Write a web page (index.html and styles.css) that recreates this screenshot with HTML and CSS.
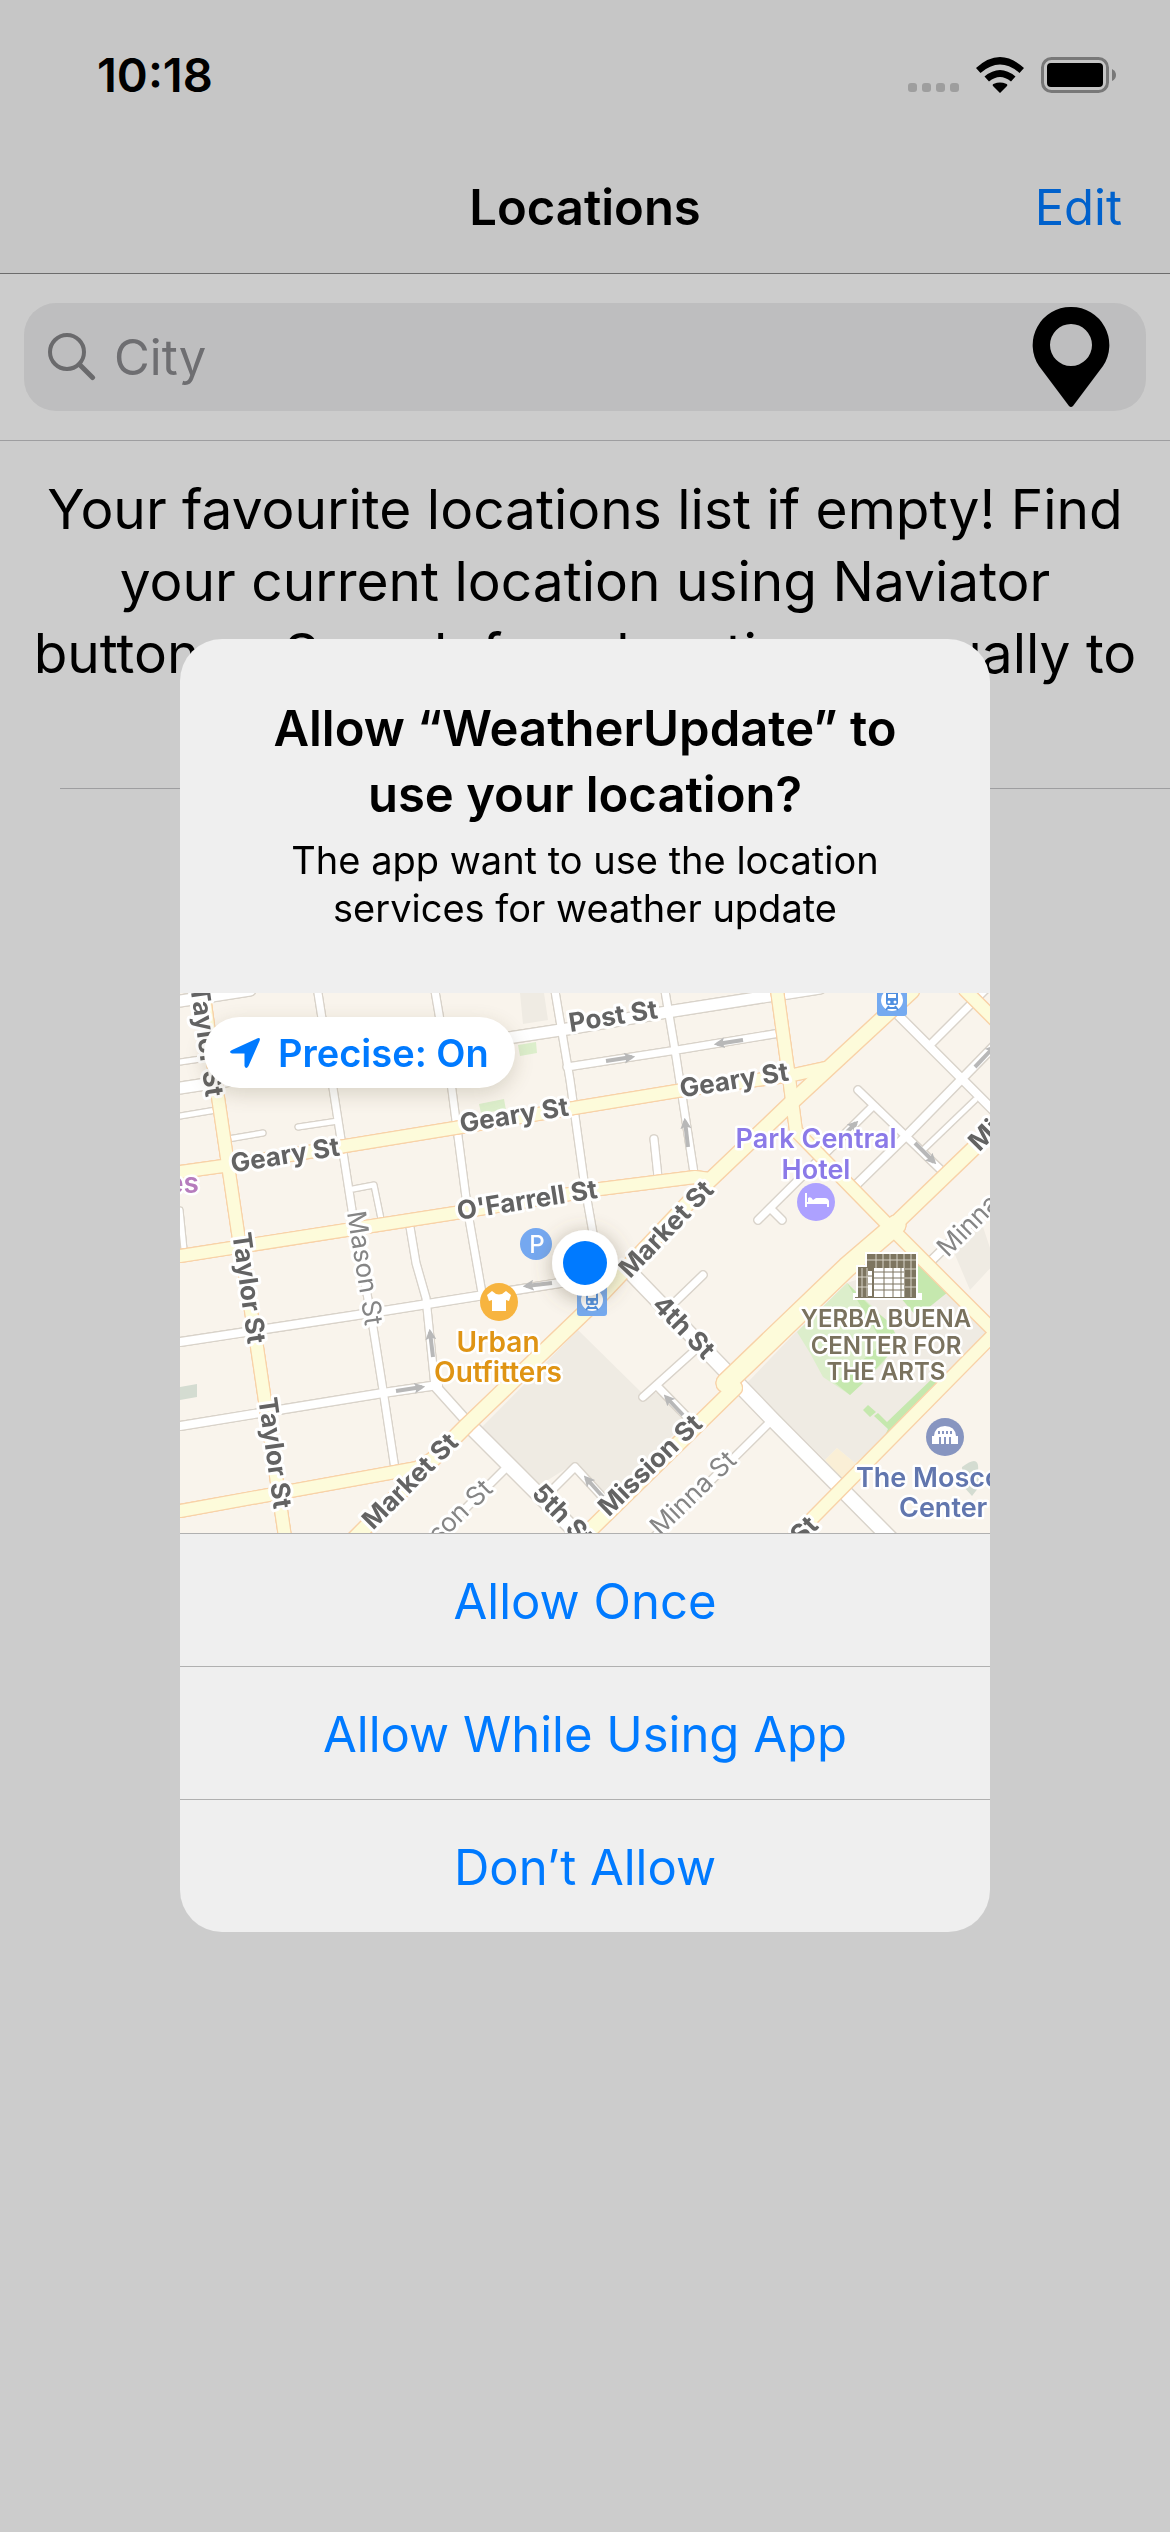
FILE: index.html
```html
<!DOCTYPE html>
<html lang="en">
<head>
<meta charset="utf-8">
<meta name="viewport" content="width=device-width, initial-scale=1">
<title>Locations</title>
<link rel="stylesheet" href="styles.css">
</head>
<body>
<div class="app">
  <header class="header">
    <div class="status">
      <span class="time">10:18</span>
      <div class="status-icons">
        <svg width="51" height="36" viewBox="0 0 51 36" aria-hidden="true"><g fill="#c6c6c6"><rect x="0" y="26" width="9" height="9" rx="3"/><rect x="14" y="26" width="9" height="9" rx="3"/><rect x="28" y="26" width="9" height="9" rx="3"/><rect x="42" y="26" width="9" height="9" rx="3"/></g></svg>
        <svg width="48" height="36" viewBox="0 0 48 36" aria-hidden="true"><path d="M24 36L17 29Q16 27.500 18 26.800Q24 24 30 26.800Q32 27.500 31 29ZM8.500 19.500Q24 6.500 39.500 19.500L35 24.500Q24 15.500 13 24.500ZM0 11Q24 -11 48 11L43.500 16Q24 -1 4.500 16Z"/></svg>
        <svg width="75" height="36" viewBox="0 0 75 36" aria-hidden="true"><rect x="1.500" y="1.500" width="65" height="33" rx="9" fill="none" stroke="#969696" stroke-width="3"/><rect x="6" y="6" width="56" height="24" rx="4"/><path d="M71 12Q75 14 75 18T71 24Z" fill="#969696"/></svg>
      </div>
    </div>
    <div class="nav">
      <h1 class="nav-title">Locations</h1>
      <button class="nav-edit" type="button">Edit</button>
    </div>
  </header>
  <main>
    <div class="search-bar">
      <label class="search-field">
        <svg width="48" height="48" viewBox="0 0 48 48" aria-label="Search"><g fill="none" stroke="#858588" stroke-width="4"><circle cx="19" cy="19" r="17"/><path d="M31.500 31.500L44.500 44.500" stroke-width="5" stroke-linecap="round"/></g></svg>
        <input class="search-input" type="text" placeholder="City">
        <button class="locate" type="button" aria-label="Use current location">
          <svg width="78" height="100" viewBox="0 0 78 100" aria-hidden="true"><path fill-rule="evenodd" d="M39 0A38 38 0 0 1 71 59L41 99Q39 101 37 99L7 59A38 38 0 0 1 39 0ZM39 17a21 21 0 1 0 0 42a21 21 0 1 0 0-42Z"/></svg>
        </button>
      </label>
    </div>
    <p class="empty">Your favourite locations list if empty! Find<br>your current location using Naviator<br>button or Search for a location manually to</p>
    <hr class="rule">
  </main>
</div>

<div class="backdrop">
  <section class="dialog" role="dialog" aria-labelledby="dialog-title">
    <div class="dialog-head">
      <h2 class="dialog-title" id="dialog-title">Allow “WeatherUpdate” to<br>use your location?</h2>
      <p class="dialog-text">The app want to use the location<br>services for weather update</p>
    </div>
    <div class="map">
      <svg class="map-art" viewBox="0 0 810 540" preserveAspectRatio="xMidYMid slice" role="img" aria-label="Map">
        <defs>
          <marker id="arrow" viewBox="0 0 10 10" refX="7" refY="5" markerWidth="11" markerHeight="11" markerUnits="userSpaceOnUse" orient="auto"><path d="M0 0L10 5L0 10L2 5Z" fill="#b8b8b8"/></marker>
          <filter id="soft" x="-50%" y="-50%" width="200%" height="200%"><feDropShadow dx="0" dy="3" stdDeviation="10" flood-color="#6a6450" flood-opacity=".45"/></filter>
          <g id="whites">
            <path stroke-width="11" d="M0 8L70-3M0 95L387 36L487 19L640-5"/>
            <path stroke-width="5" d="M0 69L34 64M0 123L36 117M48 146L83 140M118 134L158 128M173 196L194 192L201 226M0 217L4 256M795 107L743 157"/>
            <path stroke-width="7" d="M138 0L153 95L172 217L193 334L203 397L215 476M255-2L272 97L288 220L302 300M375-2L390 87L405 195L413 240M485-2L495 57L514 180M474 146L478 184M387 74L497 57L600 40M230 234L236 270L246 305L255 394M327 474L245 556M370 499L395 474L428 510M523 282L494 310M513 359L463 404M478 394L513 430M587 432L468 550M750 52L806-4M678 97L762 178M692 114L578 227M590 215L602 227"/>
            <path stroke-width="8" d="M0 349L197 319L380 290M0 433L203 400L258 392M713 17L815 119M815 52L727 142L676 192M790 230L752 267"/>
            <path stroke-width="9" d="M256 394L292 434"/>
            <path stroke-width="14" d="M290 433L410 553M448 277L593 427L715 550"/>
          </g>
          <g id="yellows">
            <path stroke-width="12" d="M23-4L38 104L58 240L77 354L105 544M0 179L43 173L275 135L400 114L497 98L613 82L645 75M0 263L275 220L420 196L515 184L530 186M0 518L237 475L262 460M597-3L608 77L616 138L710 234L815 339M785-3L815 27M816 339L608 550"/>
            <path stroke-width="14" d="M732-2L612 109L527 190L407 317L287 432L174 546M820 130L713 233L660 278M555 395L404 543"/>
            <path stroke-width="19" d="M716 232L667 274L546 390"/>
          </g>
          <g id="train">
            <rect width="30" height="30" rx="3" fill="#75aaf0"/><circle cx="15" cy="14" r="11" fill="#fff"/><path d="M11 4H19V3M9 7Q9 5 11 5H19Q21 5 21 7V17Q21 19 19 19H11Q9 19 9 17Z" fill="#4f8fe0"/><path d="M11 8H19V12H11Z" fill="#fff"/><circle cx="12" cy="16" r="1.500" fill="#fff"/><circle cx="18" cy="16" r="1.500" fill="#fff"/><path d="M12 20L9 24M18 20L21 24M10 22H20" stroke="#4f8fe0" stroke-width="2"/>
          </g>
        </defs>
        <rect width="810" height="540" fill="#f9f4ec"/>
        <path fill="#efebe3" d="M398 337L462 400H480L505 430L425 510L395 470L360 492L302 434ZM613 342L567 390L645 467L657 455L675 470L703 447L708 439L763 390L810 344L733 267L667 290ZM340 0H364L368 27L343 31ZM770 250L800 225L815 270L790 297Z"/>
        <path fill="#faefd6" d="M645 467L657 455L675 470L703 447L711 450L665 490Z"/>
        <path fill="#dceecb" d="M667 290L617 339L630 360L643 384L670 402L703 370L716 350L693 314ZM338 52L356 49L357 60L340 63ZM299 111L324 106L326 117L301 120Z"/>
        <path fill="#c5e8ae" d="M740 270L768 299L737 324L720 304ZM667 290L690 313L710 330L720 350L706 365L682 391L670 402L655 390L703 350ZM764 385L703 447L708 436L694 423L698 420L707 429L755 383ZM688 412L696 419L690 424L683 417Z"/>
        <path fill="#d4dcd1" d="M0 394L17 391V404L0 407ZM782 474Q800 460 798 478L806 485L792 503L783 493Z"/>
        <g class="casing-white"><use href="#whites"/></g>
        <g class="fill-white"><use href="#whites"/></g>
        <g class="casing-yellow"><use href="#yellows"/></g>
        <g class="fill-yellow"><use href="#yellows"/></g>
        <g class="arrows">
          <path d="M426 68L452 64"/><path d="M563 47L537 51"/><path d="M508 154L505 128"/><path d="M667 139L676 130"/><path d="M735 150L754 169"/><path d="M795 74L814 54"/><path d="M372 290L346 293"/><path d="M253 364L250 339"/><path d="M216 398L242 394"/><path d="M503 422L486 404"/><path d="M423 504L406 485"/>
        </g>
        <g class="street">
          <text transform="translate(105 162) rotate(-9)" y="9">Geary St</text>
          <text transform="translate(334 122) rotate(-9)" y="9">Geary St</text>
          <text transform="translate(554 87) rotate(-9)" y="9">Geary St</text>
          <text transform="translate(433 23) rotate(-9)" y="9">Post St</text>
          <text transform="translate(347 207) rotate(-9)" y="9">O'Farrell St</text>
          <text transform="translate(27 48) rotate(82)" y="9">Taylor St</text>
          <text transform="translate(69 295) rotate(82)" y="9">Taylor St</text>
          <text transform="translate(95 460) rotate(82)" y="9">Taylor St</text>
          <text transform="translate(486 236) rotate(-46)" y="9">Market St</text>
          <text transform="translate(230 488) rotate(-45)" y="9">Market St</text>
          <text transform="translate(470 472) rotate(-44)" y="9">Mission St</text>
          <text transform="translate(504 334) rotate(46)" y="9">4th St</text>
          <text transform="translate(383 522) rotate(46)" y="9">5th St</text>
          <text transform="translate(624 537) rotate(-45)" y="9">St</text>
          <text transform="translate(804 142) rotate(-45)" y="9">Mi</text>
        </g>
        <g class="street lane">
          <text transform="translate(185 275) rotate(81)" y="9">Mason St</text>
          <text transform="translate(513 500) rotate(-44)" y="9">Minna St</text>
          <text transform="translate(280 518) rotate(-44)" y="9">son St</text>
          <text transform="translate(788 232) rotate(-45)" y="9">Minna</text>
        </g>
        <g stroke="#fff" fill="#7d7560">
          <path stroke-width="4" d="M687 261H736V302H740V305H675V302H678V274H687Z"/>
          <path stroke="none" d="M687 261H736V305H675V304H678V274H687Z"/>
          <path stroke="#d8d4c8" stroke-width="1" fill="none" d="M696 261V275M703 261V275M710 261V275M717 261V275M724 261V304M731 261V304M687 267H736M725 276H736M725 285H736M725 294H736M682 275V304M687 275V304M678 284H692M678 294H692"/>
          <path stroke="none" fill="#fff" d="M694 275H724V304H694ZM688 278H692V303H688Z"/>
          <path stroke="#7d7560" stroke-width="1" fill="none" d="M694 279H724M694 285H724M694 291H724M694 297H724M704 275V304M713 275V304M721 275V304M688 283H692M688 291H692"/>
        </g>
        <g class="poi">
          <text class="violet" x="636" y="155">Park Central</text><text class="violet" x="636" y="186">Hotel</text>
          <text class="orange" x="318" y="359">Urban</text><text class="orange" x="318" y="389">Outfitters</text>
          <text class="olive" x="706" y="334">YERBA BUENA</text><text class="olive" x="706" y="361">CENTER FOR</text><text class="olive" x="706" y="387">THE ARTS</text>
          <text class="navy" x="676" y="494">The Mosco</text><text class="navy" x="719" y="524">Center</text>
          <text class="pink" x="19" y="200">es</text>
        </g>
        <circle cx="636" cy="209" r="19" fill="#ada1ff"/>
        <path d="M626 200V214M626 210H648V214" fill="none" stroke="#fff" stroke-width="2"/><path fill="#fff" d="M628 208V205Q631 203 633 207L636 205H645Q648 205 649 208V211H628Z"/>
        <circle cx="319" cy="309" r="19" fill="#f7b43f"/>
        <path fill="#fff" d="M312 298Q319 305 326 298L331 302L329 308L326 307V318H312V307L309 308L307 302Z"/>
        <circle cx="356" cy="251" r="16" fill="#75a8f0"/>
        <text class="parking" x="357" y="260">P</text>
        <circle cx="765" cy="444" r="19" fill="#8795c0"/>
        <path fill="#fff" d="M752 451V443H754Q755 433 765 433T776 443H778V451H771V444H769V451H766V444H764V451H761V444H759V451Z"/>
        <path stroke="#8795c0" stroke-width="2" d="M759 441V438M763 441V438M767 441V438M771 441V438"/>
        <use href="#train" x="697" y="-7"/><use href="#train" x="397" y="293"/>
        <circle cx="405" cy="270" r="33" fill="#fff" filter="url(#soft)"/><circle cx="405" cy="270" r="22" fill="#007aff"/>
      </svg>
      <button class="precise" type="button">
        <svg width="30" height="30" viewBox="0 0 30 30" aria-hidden="true"><path fill="#007aff" d="M27 .500Q31-1 29.500 3L18.500 28Q16 32 14.500 28V15.500H2Q-2 14 2 12Z"/></svg>
        <span>Precise: On</span>
      </button>
    </div>
    <div class="actions">
      <button class="action" type="button">Allow Once</button>
      <button class="action" type="button">Allow While Using App</button>
      <button class="action" type="button">Don’t Allow</button>
    </div>
  </section>
</div>
</body>
</html>
```
FILE: styles.css
```css
* { box-sizing: border-box; }
body {
  margin: 0;
  background: #fff;
  color: #000;
  font-family: Inter, "Liberation Sans", sans-serif;
}
h1, h2, p { margin: 0; }
button, input {
  border: 0;
  padding: 0;
  background: none;
  font: inherit;
}
svg { display: block; flex: none; }

.app { min-height: 100vh; }
.header {
  background: #f8f8f8;
  border-bottom: 1px solid #888;
}
.status {
  display: flex;
  align-items: center;
  justify-content: space-between;
  height: 141px;
  padding: 8px 54px 0 97px;
}
.time { font-size: 47px; font-weight: 600; }
.status-icons { display: flex; gap: 17px; }
.nav {
  display: grid;
  grid-template-columns: 1fr auto 1fr;
  align-items: center;
  height: 132px;
  padding: 0 48px;
}
.nav-title { grid-column: 2; font-size: 49px; font-weight: 600; }
.nav-edit { justify-self: end; color: #007aff; font-size: 49px; }

.search-bar { padding: 29px 24px; border-bottom: 1px solid #c6c6c8; }
.search-field {
  display: flex;
  align-items: center;
  height: 108px;
  padding: 0 36px 0 24px;
  border-radius: 32px;
  background: #eeeeef;
}
.search-input {
  flex: 1;
  min-width: 0;
  margin-left: 18px;
  font-size: 49px;
}
.search-input::placeholder { color: #8a8a8e; opacity: 1; }

.empty {
  padding: 32px 16px 99px;
  font-size: 55px;
  line-height: 72px;
  text-align: center;
  white-space: nowrap;
}
.rule {
  height: 1px;
  margin: 0 0 0 60px;
  border: 0;
  background: #c6c6c8;
}

.backdrop {
  position: fixed;
  inset: 0;
  display: flex;
  align-items: center;
  justify-content: center;
  padding-top: 39px;
  background: rgba(0, 0, 0, .2);
}
.dialog {
  width: 810px;
  max-width: 90%;
  overflow: hidden;
  border-radius: 42px;
  background: #efefef;
  text-align: center;
}
.dialog-head { padding: 57px 24px 61px; }
.dialog-title { font-size: 49px; font-weight: 600; line-height: 66px; }
.dialog-text { padding-top: 8px; font-size: 38px; line-height: 48px; }

.map { position: relative; height: 540px; }
.map-art { width: 100%; height: 100%; }
.casing-white, .fill-white, .casing-yellow, .fill-yellow {
  fill: none;
  stroke-linecap: round;
  stroke-linejoin: round;
}
.casing-white { stroke: #d9d3ca; filter: drop-shadow(1px 0 0 #d9d3ca) drop-shadow(-1px 0 0 #d9d3ca) drop-shadow(0 1px 0 #d9d3ca) drop-shadow(0 -1px 0 #d9d3ca); }
.fill-white { stroke: #fff; }
.casing-yellow { stroke: #f8d2a8; filter: drop-shadow(1px 0 0 #f8d2a8) drop-shadow(-1px 0 0 #f8d2a8) drop-shadow(0 1px 0 #f8d2a8) drop-shadow(0 -1px 0 #f8d2a8); }
.fill-yellow { stroke: #fdfbda; }
.arrows { fill: none; stroke: #b8b8b8; stroke-width: 4; }
.arrows path { marker-end: url(#arrow); }
.street {
  fill: #636363;
  stroke: #fff;
  stroke-width: 6;
  stroke-linejoin: round;
  paint-order: stroke;
  font-size: 26px;
  font-weight: 700;
  text-anchor: middle;
}
.lane { fill: #858585; font-weight: 400; }
.poi {
  stroke: #fff;
  stroke-width: 5;
  stroke-linejoin: round;
  paint-order: stroke;
  font-size: 28px;
  font-weight: 600;
  text-anchor: middle;
}
.violet { fill: #8b7ae8; font-size: 27px; }
.orange { fill: #df9414; }
.olive { fill: #7a725e; font-size: 24px; }
.navy { fill: #6176ae; font-size: 27px; text-anchor: start; }
.pink { fill: #b67cbd; text-anchor: end; }
.parking { fill: #fff; font-size: 24px; font-weight: 500; text-anchor: middle; }

.precise {
  position: absolute;
  top: 24px;
  left: 24px;
  display: flex;
  align-items: center;
  gap: 18px;
  height: 71px;
  padding: 0 26px;
  border-radius: 36px;
  background: #fff;
  box-shadow: 0 6px 20px rgba(90, 80, 50, .2);
  color: #007aff;
  font-size: 38px;
  font-weight: 600;
}
.action {
  display: block;
  width: 100%;
  height: 133px;
  padding-top: 2px;
  border-top: 1px solid #b0b0b0;
  color: #007aff;
  font-size: 49px;
}
```
